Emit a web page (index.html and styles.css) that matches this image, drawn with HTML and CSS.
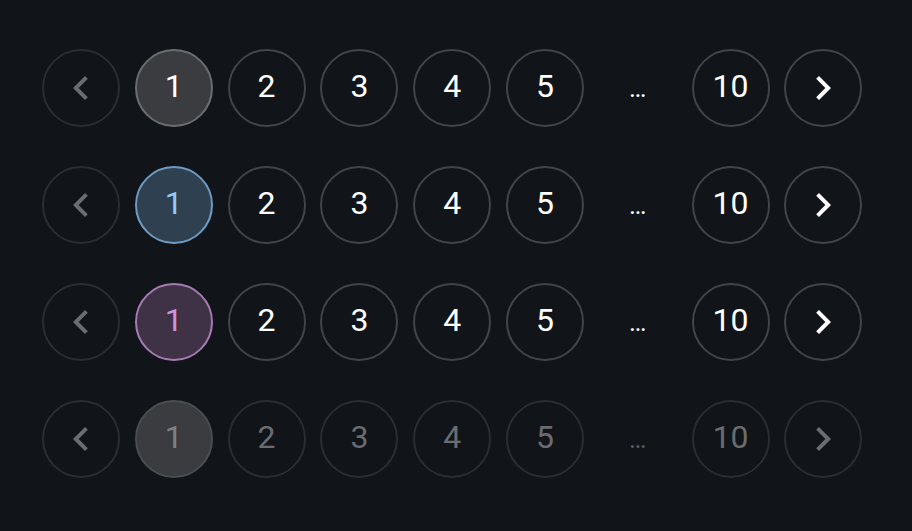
FILE: index.html
```html
<!DOCTYPE html>
<html>
<head>
  <title>Pagination</title>
  <link rel="stylesheet" href="styles.css">
</head>
<body>
<div id="pages">

  <nav class="pagination">
    <button class="item nav" disabled>
      <svg viewBox="0 0 24 24"><path d="M15.41 7.41L14 6l-6 6 6 6 1.41-1.41L10.83 12z"/></svg>
    </button>
    <button class="item selected">1</button>
    <button class="item">2</button>
    <button class="item">3</button>
    <button class="item">4</button>
    <button class="item">5</button>
    <div class="item ellipsis">…</div>
    <button class="item">10</button>
    <button class="item nav">
      <svg viewBox="0 0 24 24"><path d="M10 6L8.59 7.41 13.17 12l-4.58 4.59L10 18l6-6z"/></svg>
    </button>
  </nav>

  <nav class="pagination primary">
    <button class="item nav" disabled>
      <svg viewBox="0 0 24 24"><path d="M15.41 7.41L14 6l-6 6 6 6 1.41-1.41L10.83 12z"/></svg>
    </button>
    <button class="item selected">1</button>
    <button class="item">2</button>
    <button class="item">3</button>
    <button class="item">4</button>
    <button class="item">5</button>
    <div class="item ellipsis">…</div>
    <button class="item">10</button>
    <button class="item nav">
      <svg viewBox="0 0 24 24"><path d="M10 6L8.59 7.41 13.17 12l-4.58 4.59L10 18l6-6z"/></svg>
    </button>
  </nav>

  <nav class="pagination secondary">
    <button class="item nav" disabled>
      <svg viewBox="0 0 24 24"><path d="M15.41 7.41L14 6l-6 6 6 6 1.41-1.41L10.83 12z"/></svg>
    </button>
    <button class="item selected">1</button>
    <button class="item">2</button>
    <button class="item">3</button>
    <button class="item">4</button>
    <button class="item">5</button>
    <div class="item ellipsis">…</div>
    <button class="item">10</button>
    <button class="item nav">
      <svg viewBox="0 0 24 24"><path d="M10 6L8.59 7.41 13.17 12l-4.58 4.59L10 18l6-6z"/></svg>
    </button>
  </nav>

  <nav class="pagination disabled">
    <button class="item nav" disabled>
      <svg viewBox="0 0 24 24"><path d="M15.41 7.41L14 6l-6 6 6 6 1.41-1.41L10.83 12z"/></svg>
    </button>
    <button class="item selected" disabled>1</button>
    <button class="item" disabled>2</button>
    <button class="item" disabled>3</button>
    <button class="item" disabled>4</button>
    <button class="item" disabled>5</button>
    <div class="item ellipsis">…</div>
    <button class="item" disabled>10</button>
    <button class="item nav" disabled>
      <svg viewBox="0 0 24 24"><path d="M10 6L8.59 7.41 13.17 12l-4.58 4.59L10 18l6-6z"/></svg>
    </button>
  </nav>

</div>
</body>
</html>
```

FILE: styles.css
```css
html, body {
  height: 100%;
  margin: 0;
}

body {
  background-color: #111418;
  font-family: Roboto, 'Liberation Sans', sans-serif;
}

#pages {
  display: flex;
  flex-direction: column;
  gap: 39px;
  padding: 49px 0 0 42px;
}

.pagination {
  display: flex;
  gap: 14.8px;
}

.item {
  box-sizing: border-box;
  width: 78px;
  height: 78px;
  border-radius: 50%;
  border: 2px solid #424548;
  background: transparent;
  color: #ffffff;
  font-family: inherit;
  font-size: 32px;
  line-height: 1;
  padding: 0 0 4px 0;
  margin: 0;
  display: flex;
  justify-content: center;
  align-items: center;
}

.item svg {
  width: 48px;
  height: 48px;
  fill: currentColor;
}

.nav {
  padding: 0;
}

.nav:disabled {
  border-color: #2a2d31;
  color: #6a6c6f;
}

.ellipsis {
  border: none;
  padding: 0;
  font-size: 26px;
}

.selected {
  background-color: #3a3c3f;
  border-color: #6b6e71;
}

.primary .selected {
  background-color: #2f4050;
  border-color: #6e9bc3;
  color: #90caf9;
}

.secondary .selected {
  background-color: #3f3246;
  border-color: #a67bb3;
  color: #ce93d8;
}

.disabled .item {
  border-color: #2a2d31;
  color: #6a6c6f;
}

.disabled .ellipsis {
  color: #5c5e61;
}

.disabled .selected {
  background-color: #3a3c3f;
  border-color: #4b4e51;
  color: #7e8184;
}
```
